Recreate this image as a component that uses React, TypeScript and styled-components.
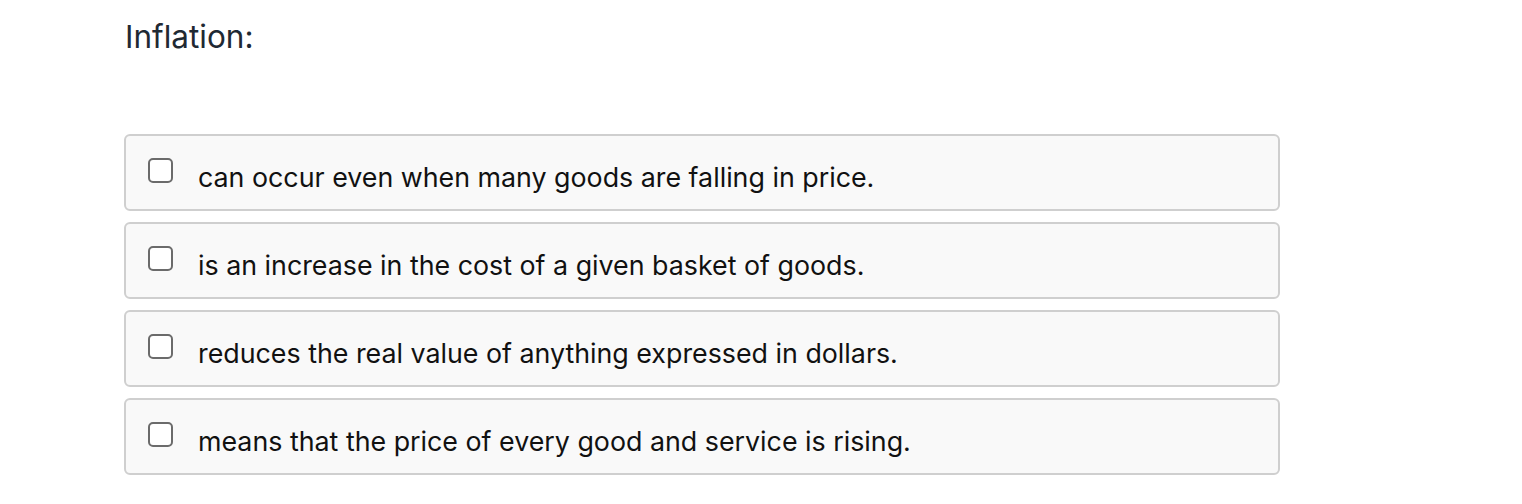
import styled, { createGlobalStyle } from "styled-components";
import { useState } from "react";

const options = [
  "can occur even when many goods are falling in price.",
  "is an increase in the cost of a given basket of goods.",
  "reduces the real value of anything expressed in dollars.",
  "means that the price of every good and service is rising.",
];

function App() {
  const [checked, setChecked] = useState<number[]>([]);

  const toggle = (i: number) =>
    setChecked((prev) =>
      prev.includes(i) ? prev.filter((x) => x !== i) : [...prev, i]
    );

  return (
    <>
      <GlobalStyle />
      <Question>
        <Prompt>Inflation:</Prompt>
        <Choices>
          {options.map((text, i) => (
            <Choice key={i}>
              <Box
                type="checkbox"
                checked={checked.includes(i)}
                onChange={() => toggle(i)}
              />
              <Label>{text}</Label>
            </Choice>
          ))}
        </Choices>
      </Question>
    </>
  );
}

const GlobalStyle = createGlobalStyle`
  body {
    margin: 0;
    background: #fff;
    font-family: Inter, "Open Sans", sans-serif;
  }
`;

const Question = styled.div`
  width: 1156px;
  padding: 18px 0 0 124px;
`;

const Prompt = styled.h2`
  margin: 0 0 78px 1px;
  font-size: 31.5px;
  font-weight: 400;
  line-height: 38px;
  color: #1f2933;
`;

const Choices = styled.div`
  display: flex;
  flex-direction: column;
  gap: 11px;
`;

const Choice = styled.label`
  display: flex;
  align-items: flex-start;
  gap: 25px;
  height: 77px;
  box-sizing: border-box;
  padding: 22px 22px 0;
  background: #f9f9f9;
  border: 2px solid #cfcfcf;
  border-radius: 6px;
  cursor: pointer;
`;

const Box = styled.input`
  appearance: none;
  margin: 0;
  flex: none;
  width: 25px;
  height: 25px;
  border: 2px solid #6b6b6b;
  border-radius: 5px;
  background: #fff;
  cursor: pointer;

  &:checked {
    background: #2f6fd6;
    border-color: #2f6fd6;
  }
`;

const Label = styled.span`
  margin-top: 3px;
  font-size: 26.8px;
  line-height: 32px;
  color: #111;
`;

export default App;
